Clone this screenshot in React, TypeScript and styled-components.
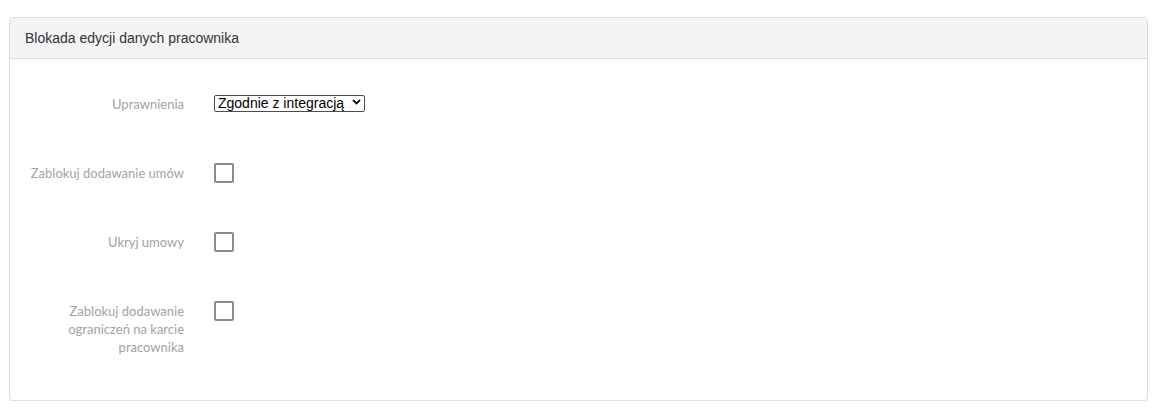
import styled, { createGlobalStyle } from 'styled-components';

const GlobalStyle = createGlobalStyle`
  html, body {
    margin: 0;
    padding: 0;
    background: #fff;
  }
  body {
    font-family: "Liberation Sans", Arial, sans-serif;
  }
`;

const Page = styled.div`
  padding: 17px 8px 0 9px;
`;

const Panel = styled.section`
  border: 1px solid #dddddd;
  border-radius: 4px;
  background: #fff;
  box-shadow: 0 1px 1px rgba(0, 0, 0, 0.05);
  overflow: hidden;
`;

const PanelHeading = styled.div`
  height: 41px;
  box-sizing: border-box;
  padding: 12px 15px 0;
  background: #f4f4f4;
  border-bottom: 1px solid #dddddd;
  color: #333;
  font-size: 14px;
  line-height: 16px;
`;

const PanelBody = styled.div`
  display: flex;
  flex-direction: column;
  gap: 49px;
  padding: 34px 15px 44px;
`;

const FormRow = styled.div<{ $h?: number }>`
  display: grid;
  grid-template-columns: 159px 1fr;
  column-gap: 30px;
  align-items: start;
  min-height: ${(p) => p.$h ?? 20}px;
`;

const Label = styled.label<{ $top?: number }>`
  padding-top: ${(p) => p.$top ?? 1}px;
  text-align: right;
  font-family: Lato, "Liberation Sans", sans-serif;
  font-size: 13px;
  line-height: 18px;
  color: #a3a3a3;
`;

const SelectWrap = styled.div`
  position: relative;
  width: 151px;
  height: 17px;
  margin-top: 1px;
`;

const Select = styled.select`
  appearance: none;
  width: 100%;
  height: 17px;
  box-sizing: border-box;
  margin: 0;
  padding: 0 16px 0 3px;
  border: 1px solid #4d4d4d;
  border-radius: 2px;
  background: #fff;
  color: #000;
  font-family: "Liberation Sans", Arial, sans-serif;
  font-size: 14px;
  line-height: 15px;
  outline: none;
`;

const Chevron = styled.svg`
  position: absolute;
  right: 4px;
  top: 5px;
  width: 9px;
  height: 6px;
  pointer-events: none;
`;

const Checkbox = styled.input.attrs({ type: 'checkbox' })`
  appearance: none;
  margin: 0;
  width: 20px;
  height: 20px;
  box-sizing: border-box;
  border: 2px solid #8c8c8c;
  border-radius: 2px;
  background: #fff;
`;

const checkRows = [
  { id: 'umowy', label: 'Zablokuj dodawanie umów' },
  { id: 'ukryj', label: 'Ukryj umowy' },
  { id: 'ograniczenia', label: 'Zablokuj dodawanie ograniczeń na karcie pracownika' },
];

export default function App() {
  return (
    <>
      <GlobalStyle />
      <Page>
        <Panel>
          <PanelHeading>Blokada edycji danych pracownika</PanelHeading>
          <PanelBody>
            <FormRow $h={21}>
              <Label htmlFor="uprawnienia" $top={2}>Uprawnienia</Label>
              <SelectWrap>
                <Select id="uprawnienia" defaultValue="integracja">
                  <option value="integracja">Zgodnie z integracją</option>
                </Select>
                <Chevron viewBox="0 0 9 6">
                  <path d="M1 1l3.5 3.5L8 1" fill="none" stroke="#111" strokeWidth="1.8" />
                </Chevron>
              </SelectWrap>
            </FormRow>
            {checkRows.map((r) => (
              <FormRow key={r.id}>
                <Label htmlFor={r.id}>{r.label}</Label>
                <Checkbox id={r.id} />
              </FormRow>
            ))}
          </PanelBody>
        </Panel>
      </Page>
    </>
  );
}
